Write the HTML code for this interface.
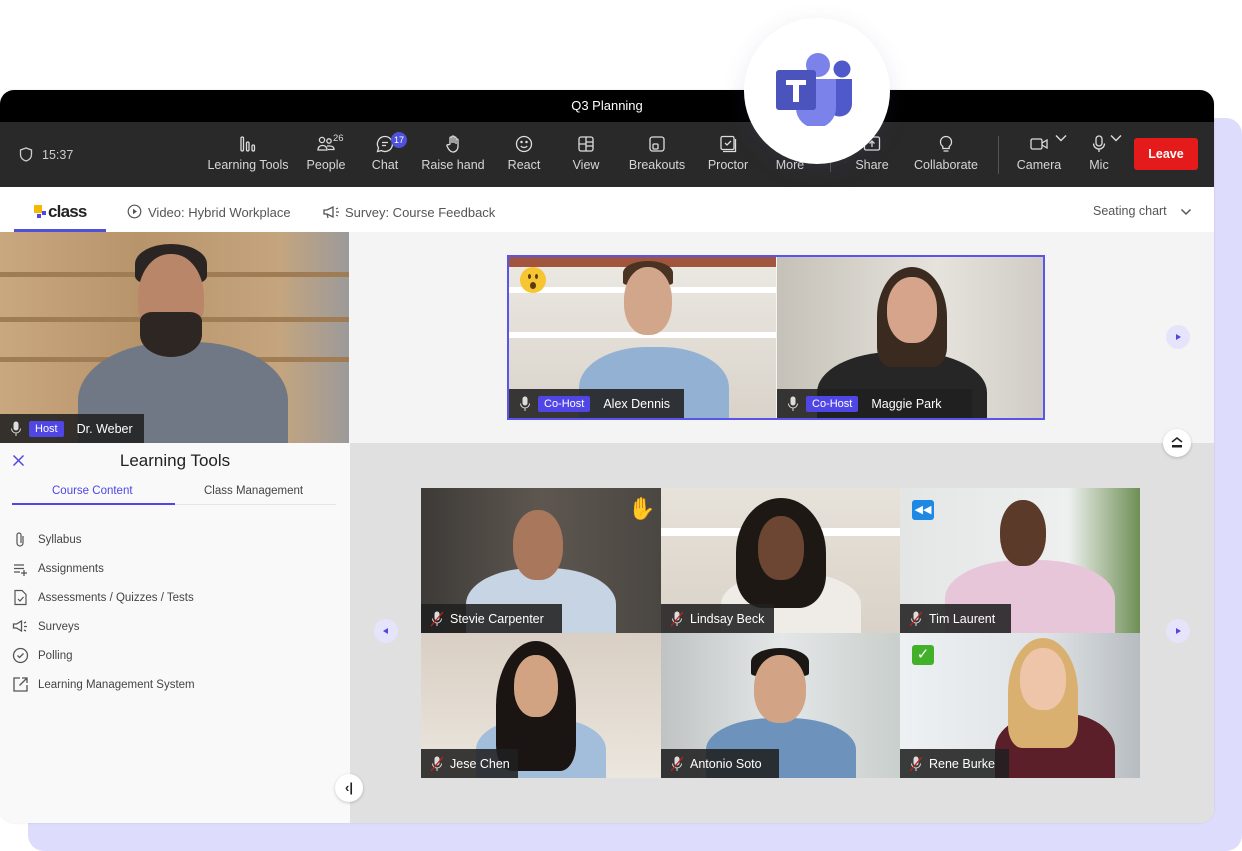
<!DOCTYPE html>
<html><head><meta charset="utf-8"><style>
*{box-sizing:border-box;margin:0;padding:0}
body{width:1242px;height:851px;background:#fff;font-family:"Liberation Sans",sans-serif;position:relative;overflow:hidden}
.abs{position:absolute}
.tb{position:absolute;top:122px;height:65px;color:#d6d6d6;font-size:12.5px;text-align:center;white-space:nowrap}
.tb svg{display:block;margin:12px auto 4px;width:20px;height:20px}
.tile{position:absolute;overflow:hidden}
.head{position:absolute;border-radius:48% 48% 45% 45%}
.body{position:absolute;border-radius:45% 45% 0 0}
.lab{position:absolute;left:0;bottom:0;height:29px;background:rgba(32,32,32,.88);color:#fff;font-size:12.5px;display:flex;align-items:center;padding:0 10px 0 10px;gap:7px;white-space:nowrap}
.badge{background:#4f46e5;color:#fff;font-size:11px;padding:2px 6px;border-radius:2px}
.mic{width:12px;height:16px;flex:none}
.li{position:absolute;left:12px;font-size:11.5px;color:#444;display:flex;align-items:center;gap:9px}
.li svg{width:17px;height:17px}
.nav{position:absolute;width:24px;height:24px;border-radius:50%;background:#e6e4fb}
</style></head><body>
<div class="abs" style="left:28px;top:118px;width:1214px;height:733px;background:#dedcfd;border-radius:16px"></div>
<div class="abs" style="left:0;top:90px;width:1214px;height:733px;background:#f8f8f8;border-radius:14px;overflow:hidden;box-shadow:0 0 2px rgba(0,0,0,.1)">
 <div class="abs" style="left:0;top:0;width:1214px;height:32px;background:#000;color:#fff;font-size:13px;text-align:center;line-height:32px">Q3 Planning</div>
 <div class="abs" style="left:0;top:32px;width:1214px;height:65px;background:#292929"></div>
 <div class="abs" style="left:0;top:97px;width:1214px;height:45px;background:#fff"></div>
 <div class="abs" style="left:350px;top:142px;width:864px;height:211px;background:#f4f4f4"></div>
 <div class="abs" style="left:350px;top:353px;width:864px;height:380px;background:#e0e0e0"></div>
 <div class="abs" style="left:0;top:353px;width:350px;height:380px;background:#f9f9f9"></div>
</div>
<svg class="abs" style="left:19px;top:147px" width="14" height="15" viewBox="0 0 14 15"><path d="M7 1L1.5 3v4.5c0 3.2 2.4 5.5 5.5 6.5 3.1-1 5.5-3.3 5.5-6.5V3z" fill="none" stroke="#ccc" stroke-width="1.3"/></svg>
<div class="abs" style="left:42px;top:148px;color:#ccc;font-size:12.5px">15:37</div>
<div class="tb" style="left:205px;width:86px"><svg viewBox="0 0 20 20" fill="none" stroke="#ddd" stroke-width="1.3"><rect x="3" y="3" width="2.5" height="14" rx="1.2"/><rect x="8.5" y="8" width="2.5" height="9" rx="1.2"/><rect x="14" y="11" width="2.5" height="6" rx="1.2"/></svg>Learning Tools</div>
<div class="tb" style="left:302px;width:48px"><svg viewBox="0 0 20 20" fill="none" stroke="#ddd" stroke-width="1.3"><circle cx="6" cy="6" r="2.6"/><circle cx="13" cy="7" r="2.2"/><path d="M2 16c0-3 2-4.5 4-4.5h1c2 0 4 1.5 4 4.5zM11 12h3c2 0 4 1 4 3.5h-6"/></svg>People</div>
<div class="abs" style="left:333px;top:133px;color:#ddd;font-size:9.5px">26</div>
<div class="tb" style="left:365px;width:40px"><svg viewBox="0 0 20 20" fill="none" stroke="#ddd" stroke-width="1.3"><path d="M10 2.5a7.5 7.5 0 1 1-3.6 14.1L2.5 17.5l1-3.6A7.5 7.5 0 0 1 10 2.5z"/><path d="M7 8.5h6M7 11.5h4"/></svg>Chat</div>
<div class="abs" style="left:391px;top:132px;width:16px;height:16px;border-radius:50%;background:#4f52d9;color:#fff;font-size:9px;text-align:center;line-height:16px">17</div>
<div class="tb" style="left:418px;width:70px"><svg viewBox="0 0 20 20" fill="none" stroke="#ddd" stroke-width="1.3"><path d="M7 10V4a1 1 0 0 1 2 0v5V3a1 1 0 0 1 2 0v6V4a1 1 0 0 1 2 0v6V6a1 1 0 0 1 2 0v6c0 4-2.5 6-5 6-2 0-3-1-4.5-3L4 12c-.5-1 .8-2 1.7-1.2z"/></svg>Raise hand</div>
<div class="tb" style="left:502px;width:44px"><svg viewBox="0 0 20 20" fill="none" stroke="#ddd" stroke-width="1.3"><circle cx="10" cy="10" r="7.5"/><circle cx="7.5" cy="8" r=".6" fill="#ddd"/><circle cx="12.5" cy="8" r=".6" fill="#ddd"/><path d="M6.8 12c1.7 2 4.7 2 6.4 0"/></svg>React</div>
<div class="tb" style="left:566px;width:40px"><svg viewBox="0 0 20 20" fill="none" stroke="#ddd" stroke-width="1.3"><rect x="3" y="3" width="14" height="14" rx="2"/><path d="M10 3v14M3 10h7M10 8h7M10 12h7"/></svg>View</div>
<div class="tb" style="left:625px;width:64px"><svg viewBox="0 0 20 20" fill="none" stroke="#ddd" stroke-width="1.3"><rect x="3" y="3" width="14" height="14" rx="2.5"/><rect x="6" y="10" width="5" height="5" rx="1"/></svg>Breakouts</div>
<div class="tb" style="left:702px;width:52px"><svg viewBox="0 0 20 20" fill="none" stroke="#ddd" stroke-width="1.3"><rect x="3" y="2.5" width="13" height="13" rx="1.5"/><path d="M5 17.5h12.5V5M7 9l2 2 4-4"/></svg>Proctor</div>
<div class="tb" style="left:768px;width:44px"><svg viewBox="0 0 20 20"></svg>More</div>
<div class="abs" style="left:830px;top:150px;width:1px;height:22px;background:#555"></div>
<div class="tb" style="left:850px;width:44px"><svg viewBox="0 0 20 20" fill="none" stroke="#ddd" stroke-width="1.3"><rect x="2.5" y="3" width="15" height="13" rx="1.5"/><path d="M10 13V7M7.5 9.5 10 7l2.5 2.5"/></svg>Share</div>
<div class="tb" style="left:910px;width:72px"><svg viewBox="0 0 20 20" fill="none" stroke="#ddd" stroke-width="1.3"><path d="M10 2.5a5.5 5.5 0 0 0-3.2 10v2h6.4v-2A5.5 5.5 0 0 0 10 2.5zM7.5 17h5"/></svg>Collaborate</div>
<div class="abs" style="left:998px;top:136px;width:1px;height:38px;background:#555"></div>
<div class="tb" style="left:1013px;width:52px"><svg viewBox="0 0 20 20" fill="none" stroke="#ddd" stroke-width="1.3"><rect x="2" y="5" width="11" height="10" rx="1.5"/><path d="M13 9l5-3v8l-5-3"/></svg>Camera</div>
<div class="tb" style="left:1084px;width:30px"><svg viewBox="0 0 20 20" fill="none" stroke="#ddd" stroke-width="1.3"><rect x="7" y="2" width="6" height="10" rx="3"/><path d="M4.5 9.5a5.5 5.5 0 0 0 11 0M10 15v3"/></svg>Mic</div>
<svg class="abs" style="left:1055px;top:134px" width="12" height="8"><path d="M1 1.5l5 5 5-5" fill="none" stroke="#ddd" stroke-width="1.4"/></svg>
<svg class="abs" style="left:1110px;top:134px" width="12" height="8"><path d="M1 1.5l5 5 5-5" fill="none" stroke="#ddd" stroke-width="1.4"/></svg>
<div class="abs" style="left:1134px;top:138px;width:64px;height:32px;background:#e51b1b;border-radius:3px;color:#fff;font-weight:bold;font-size:12.5px;text-align:center;line-height:32px">Leave</div>
<div class="abs" style="left:34px;top:205px;width:8px;height:8px;background:#f5b800"></div>
<div class="abs" style="left:42px;top:211px;width:4px;height:4px;background:#4f46e5"></div>
<div class="abs" style="left:37px;top:214px;width:4px;height:4px;background:#4f46e5"></div>
<div class="abs" style="left:48px;top:202px;font-size:17px;font-weight:bold;color:#222;letter-spacing:-.8px">class</div>
<div class="abs" style="left:14px;top:229px;width:92px;height:3px;background:#4f52d9"></div>
<svg class="abs" style="left:127px;top:204px" width="15" height="15"><circle cx="7.5" cy="7.5" r="6.3" fill="none" stroke="#555" stroke-width="1.2"/><path d="M6 4.8v5.4l4-2.7z" fill="#555"/></svg>
<div class="abs" style="left:148px;top:205px;font-size:13px;color:#555">Video: Hybrid Workplace</div>
<svg class="abs" style="left:322px;top:205px" width="18" height="14"><path d="M2 5h3l6-3v10L5 9H2z" fill="none" stroke="#555" stroke-width="1.3"/><path d="M5 9l1 4M14 4l2-1M14 7h3M14 10l2 1" stroke="#555" stroke-width="1.2"/></svg>
<div class="abs" style="left:345px;top:205px;font-size:13px;color:#555">Survey: Course Feedback</div>
<div class="abs" style="left:1093px;top:204px;font-size:12.5px;color:#555">Seating chart</div>
<svg class="abs" style="left:1180px;top:208px" width="12" height="8"><path d="M1.5 1.5l4.5 4.5 4.5-4.5" fill="none" stroke="#555" stroke-width="1.5"/></svg>

<div class="tile" style="left:0;top:232px;width:349px;height:211px;background:linear-gradient(90deg,#c9a77f,#b8946b 40%,#c5a57e 80%,#9c9a9a)">
 <div class="abs" style="left:0;top:40px;width:349px;height:5px;background:#a07c54"></div>
 <div class="abs" style="left:0;top:85px;width:349px;height:5px;background:#a07c54"></div>
 <div class="abs" style="left:0;top:125px;width:349px;height:5px;background:#a07c54"></div>
 <div class="body" style="left:78px;top:110px;width:210px;height:130px;background:#6f7884"></div>
 <div class="abs" style="left:135px;top:12px;width:72px;height:40px;background:#2a2522;border-radius:50% 50% 20% 20%"></div>
 <div class="head" style="left:138px;top:22px;width:66px;height:90px;background:#b9866a"></div>
 <div class="abs" style="left:140px;top:80px;width:62px;height:45px;background:#2d2623;border-radius:20% 20% 50% 50%"></div>
 <div class="lab" style="width:144px"><svg class="mic" viewBox="0 0 12 16"><rect x="3.5" y="0.5" width="5" height="9" rx="2.5" fill="#ddd"/><path d="M1.5 7.5a4.5 4.5 0 0 0 9 0M6 12v3" stroke="#ddd" fill="none"/></svg><span class="badge">Host</span><span style="margin-left:6px">Dr. Weber</span></div>
</div>
<svg class="abs" style="left:12px;top:454px" width="13" height="13"><path d="M1.5 1.5l10 10M11.5 1.5l-10 10" stroke="#4f46e5" stroke-width="1.5"/></svg>
<div class="abs" style="left:0;top:451px;width:350px;text-align:center;font-size:17px;color:#222">Learning Tools</div>
<div class="abs" style="left:52px;top:485px;font-size:11.5px;color:#4f46e5">Course Content</div>
<div class="abs" style="left:204px;top:485px;font-size:11.5px;color:#444">Class Management</div>
<div class="abs" style="left:12px;top:504px;width:324px;height:1px;background:#e6e6e6"></div>
<div class="abs" style="left:12px;top:503px;width:163px;height:2px;background:#4f46e5"></div>
<div class="li" style="top:531px"><svg viewBox="0 0 17 17" fill="none" stroke="#555" stroke-width="1.2"><path d="M11 5v7a3 3 0 0 1-6 0V4a2 2 0 0 1 4 0v8"/></svg>Syllabus</div>
<div class="li" style="top:560px"><svg viewBox="0 0 17 17" fill="none" stroke="#555" stroke-width="1.3"><path d="M2 5h10M2 8.5h10M2 12h6M12 10v6M9 13h6"/></svg>Assignments</div>
<div class="li" style="top:589px"><svg viewBox="0 0 17 17" fill="none" stroke="#555" stroke-width="1.2"><path d="M3 1.5h7l4 4v10H3z"/><path d="M6 10l2 2 3.5-4"/></svg>Assessments / Quizzes / Tests</div>
<div class="li" style="top:618px"><svg viewBox="0 0 17 17" fill="none" stroke="#555" stroke-width="1.3"><path d="M1.5 6h3l5-3v10l-5-3h-3z"/><path d="M12 5l2-1M12 8.5h3M12 12l2 1"/></svg>Surveys</div>
<div class="li" style="top:647px"><svg viewBox="0 0 17 17" fill="none" stroke="#555" stroke-width="1.3"><circle cx="8.5" cy="8.5" r="7"/><path d="M5.5 8.5l2 2 4-4"/></svg>Polling</div>
<div class="li" style="top:676px"><svg viewBox="0 0 17 17" fill="none" stroke="#555" stroke-width="1.3"><path d="M8 2H2v13h13V9M10 2h5v5M15 2 7.5 9.5"/></svg>Learning Management System</div>
<div class="abs" style="left:335px;top:774px;width:28px;height:28px;border-radius:50%;background:#fff;box-shadow:0 1px 3px rgba(0,0,0,.2);font-size:13px;font-weight:bold;text-align:center;line-height:28px;color:#222">‹|</div>

<div class="abs" style="left:507px;top:255px;width:538px;height:165px;border:2px solid #5b54e8"></div>
<div class="tile" style="left:509px;top:257px;width:267px;height:161px;background:linear-gradient(180deg,#ece9e3,#d9d3ca)">
 <div class="abs" style="left:0;top:0;width:267px;height:10px;background:#a2553d"></div>
 <div class="abs" style="left:0;top:30px;width:267px;height:6px;background:#fff"></div>
 <div class="abs" style="left:0;top:75px;width:267px;height:6px;background:#fff"></div>
 <div class="body" style="left:70px;top:90px;width:150px;height:90px;background:#93b2d3"></div>
 <div class="abs" style="left:114px;top:4px;width:50px;height:24px;background:#4a3322;border-radius:50% 50% 10% 10%"></div>
 <div class="head" style="left:115px;top:10px;width:48px;height:68px;background:#d2a68a"></div>
 <div class="abs" style="left:11px;top:10px;width:26px;height:26px;border-radius:50%;background:#f7c531"><div class="abs" style="left:8px;top:7px;width:3px;height:5px;background:#5a3a10;border-radius:50%"></div><div class="abs" style="left:15px;top:7px;width:3px;height:5px;background:#5a3a10;border-radius:50%"></div><div class="abs" style="left:10px;top:15px;width:6px;height:7px;background:#5a3a10;border-radius:50%"></div></div>
 <div class="lab" style="width:175px"><svg class="mic" viewBox="0 0 12 16"><rect x="3.5" y="0.5" width="5" height="9" rx="2.5" fill="#ddd"/><path d="M1.5 7.5a4.5 4.5 0 0 0 9 0M6 12v3" stroke="#ddd" fill="none"/></svg><span class="badge">Co-Host</span><span style="margin-left:6px">Alex Dennis</span></div>
</div>
<div class="tile" style="left:777px;top:257px;width:266px;height:161px;background:linear-gradient(90deg,#c5c1b8,#e6e3dd 60%,#d0ccc5)">
 <div class="body" style="left:40px;top:95px;width:170px;height:90px;background:#262626"></div>
 <div class="abs" style="left:100px;top:10px;width:70px;height:100px;background:#3b2a20;border-radius:50% 50% 20% 20%"></div>
 <div class="head" style="left:110px;top:20px;width:50px;height:66px;background:#d6a48a"></div>
 <div class="lab" style="width:195px"><svg class="mic" viewBox="0 0 12 16"><rect x="3.5" y="0.5" width="5" height="9" rx="2.5" fill="#ddd"/><path d="M1.5 7.5a4.5 4.5 0 0 0 9 0M6 12v3" stroke="#ddd" fill="none"/></svg><span class="badge">Co-Host</span><span style="margin-left:6px">Maggie Park</span></div>
</div>
<div class="nav" style="left:1166px;top:325px"><svg width="24" height="24"><path d="M10 9l5 3-5 3z" fill="#4f46e5"/></svg></div>
<div class="abs" style="left:1163px;top:429px;width:28px;height:28px;border-radius:50%;background:#fff;box-shadow:0 1px 3px rgba(0,0,0,.2)"><svg width="28" height="28"><path d="M9 13l5-4 5 4" fill="none" stroke="#222" stroke-width="1.5"/><rect x="9" y="16" width="10" height="2.5" fill="#222"/></svg></div>

<div class="tile" style="left:421px;top:488px;width:240px;height:145px;background:linear-gradient(90deg,#3d3a37,#5e5750 50%,#4a4642)">
 <div class="body" style="left:45px;top:80px;width:150px;height:80px;background:#c7d4e4"></div>
 <div class="head" style="left:92px;top:22px;width:50px;height:70px;background:#a8775c"></div>
 <div class="abs" style="left:207px;top:8px;font-size:22px">✋</div>
 <div class="lab" style="width:141px"><svg class="mic" viewBox="0 0 12 16"><rect x="3.5" y="0.5" width="5" height="9" rx="2.5" fill="#ddd"/><path d="M1.5 7.5a4.5 4.5 0 0 0 9 0M6 12v3" stroke="#ddd" fill="none"/><path d="M0 15 12 1" stroke="#c02020" stroke-width="1.3"/></svg>Stevie Carpenter</div>
</div>
<div class="tile" style="left:661px;top:488px;width:239px;height:145px;background:linear-gradient(180deg,#e7e2da,#d9d2c8)">
 <div class="abs" style="left:0;top:40px;width:239px;height:8px;background:#fff"></div>
 <div class="body" style="left:60px;top:85px;width:140px;height:70px;background:#efece8"></div>
 <div class="abs" style="left:75px;top:10px;width:90px;height:110px;background:#1e1814;border-radius:50% 50% 30% 30%"></div>
 <div class="head" style="left:97px;top:28px;width:46px;height:64px;background:#6c4633"></div>
 <div class="lab" style="width:113px"><svg class="mic" viewBox="0 0 12 16"><rect x="3.5" y="0.5" width="5" height="9" rx="2.5" fill="#ddd"/><path d="M1.5 7.5a4.5 4.5 0 0 0 9 0M6 12v3" stroke="#ddd" fill="none"/><path d="M0 15 12 1" stroke="#c02020" stroke-width="1.3"/></svg>Lindsay Beck</div>
</div>
<div class="tile" style="left:900px;top:488px;width:240px;height:145px;background:linear-gradient(90deg,#e4e6e6,#eef0ef 70%,#6e8f55)">
 <div class="body" style="left:45px;top:72px;width:170px;height:85px;background:#e8c6da"></div>
 <div class="head" style="left:100px;top:12px;width:46px;height:66px;background:#5b3a2a"></div>
 <div class="abs" style="left:12px;top:12px;width:22px;height:20px;border-radius:3px;background:#1e88e5;color:#fff;font-size:11px;text-align:center;line-height:20px">◀◀</div>
 <div class="lab" style="width:111px"><svg class="mic" viewBox="0 0 12 16"><rect x="3.5" y="0.5" width="5" height="9" rx="2.5" fill="#ddd"/><path d="M1.5 7.5a4.5 4.5 0 0 0 9 0M6 12v3" stroke="#ddd" fill="none"/><path d="M0 15 12 1" stroke="#c02020" stroke-width="1.3"/></svg>Tim Laurent</div>
</div>
<div class="tile" style="left:421px;top:633px;width:240px;height:145px;background:linear-gradient(180deg,#d9cfc4,#ebe6de)">
 <div class="body" style="left:55px;top:85px;width:130px;height:70px;background:#a3bedb"></div>
 <div class="abs" style="left:75px;top:8px;width:80px;height:130px;background:#1a1412;border-radius:50% 50% 20% 20%"></div>
 <div class="head" style="left:93px;top:22px;width:44px;height:62px;background:#d2a382"></div>
 <div class="lab" style="width:97px"><svg class="mic" viewBox="0 0 12 16"><rect x="3.5" y="0.5" width="5" height="9" rx="2.5" fill="#ddd"/><path d="M1.5 7.5a4.5 4.5 0 0 0 9 0M6 12v3" stroke="#ddd" fill="none"/><path d="M0 15 12 1" stroke="#c02020" stroke-width="1.3"/></svg>Jese Chen</div>
</div>
<div class="tile" style="left:661px;top:633px;width:239px;height:145px;background:linear-gradient(90deg,#bfc3c4,#e4e7e8 50%,#c9cfcc)">
 <div class="body" style="left:45px;top:85px;width:150px;height:70px;background:#6d93bd"></div>
 <div class="abs" style="left:90px;top:15px;width:58px;height:28px;background:#1b1714;border-radius:50% 50% 10% 10%"></div>
 <div class="head" style="left:93px;top:22px;width:52px;height:68px;background:#d2a384"></div>
 <div class="lab" style="width:118px"><svg class="mic" viewBox="0 0 12 16"><rect x="3.5" y="0.5" width="5" height="9" rx="2.5" fill="#ddd"/><path d="M1.5 7.5a4.5 4.5 0 0 0 9 0M6 12v3" stroke="#ddd" fill="none"/><path d="M0 15 12 1" stroke="#c02020" stroke-width="1.3"/></svg>Antonio Soto</div>
</div>
<div class="tile" style="left:900px;top:633px;width:240px;height:145px;background:linear-gradient(90deg,#eef1f3,#dfe3e6 60%,#b7bcc0)">
 <div class="body" style="left:95px;top:80px;width:120px;height:80px;background:#5a1f28"></div>
 <div class="abs" style="left:108px;top:5px;width:70px;height:110px;background:#d9b06f;border-radius:50% 50% 20% 20%"></div>
 <div class="head" style="left:120px;top:15px;width:46px;height:62px;background:#efc5aa"></div>
 <div class="abs" style="left:12px;top:12px;width:22px;height:20px;border-radius:3px;background:#43b02a;color:#fff;font-size:15px;text-align:center;line-height:20px">✓</div>
 <div class="lab" style="width:109px"><svg class="mic" viewBox="0 0 12 16"><rect x="3.5" y="0.5" width="5" height="9" rx="2.5" fill="#ddd"/><path d="M1.5 7.5a4.5 4.5 0 0 0 9 0M6 12v3" stroke="#ddd" fill="none"/><path d="M0 15 12 1" stroke="#c02020" stroke-width="1.3"/></svg>Rene Burke</div>
</div>
<div class="nav" style="left:374px;top:619px"><svg width="24" height="24"><path d="M14 9l-5 3 5 3z" fill="#4f46e5"/></svg></div>
<div class="nav" style="left:1166px;top:619px"><svg width="24" height="24"><path d="M10 9l5 3-5 3z" fill="#4f46e5"/></svg></div>

<div class="abs" style="left:744px;top:18px;width:146px;height:146px;border-radius:50%;background:#fff;box-shadow:0 6px 24px rgba(80,80,160,.12)"></div>
<svg class="abs" style="left:772px;top:50px" width="84" height="76" viewBox="0 0 84 76">
 <circle cx="46" cy="15" r="12" fill="#7b83eb"/>
 <circle cx="70" cy="19" r="8.5" fill="#5059c9"/>
 <path d="M55 29h25v25a12.5 12.5 0 0 1-25 0z" fill="#5059c9"/>
 <path d="M24 29h40v29a20 20 0 0 1-40 0z" fill="#7b83eb"/>
 <rect x="4" y="20" width="40" height="40" rx="3" fill="#4b53bc"/>
 <path d="M14 30h20v5h-7v17h-6V35h-7z" fill="#fff"/>
</svg>
</body></html>
